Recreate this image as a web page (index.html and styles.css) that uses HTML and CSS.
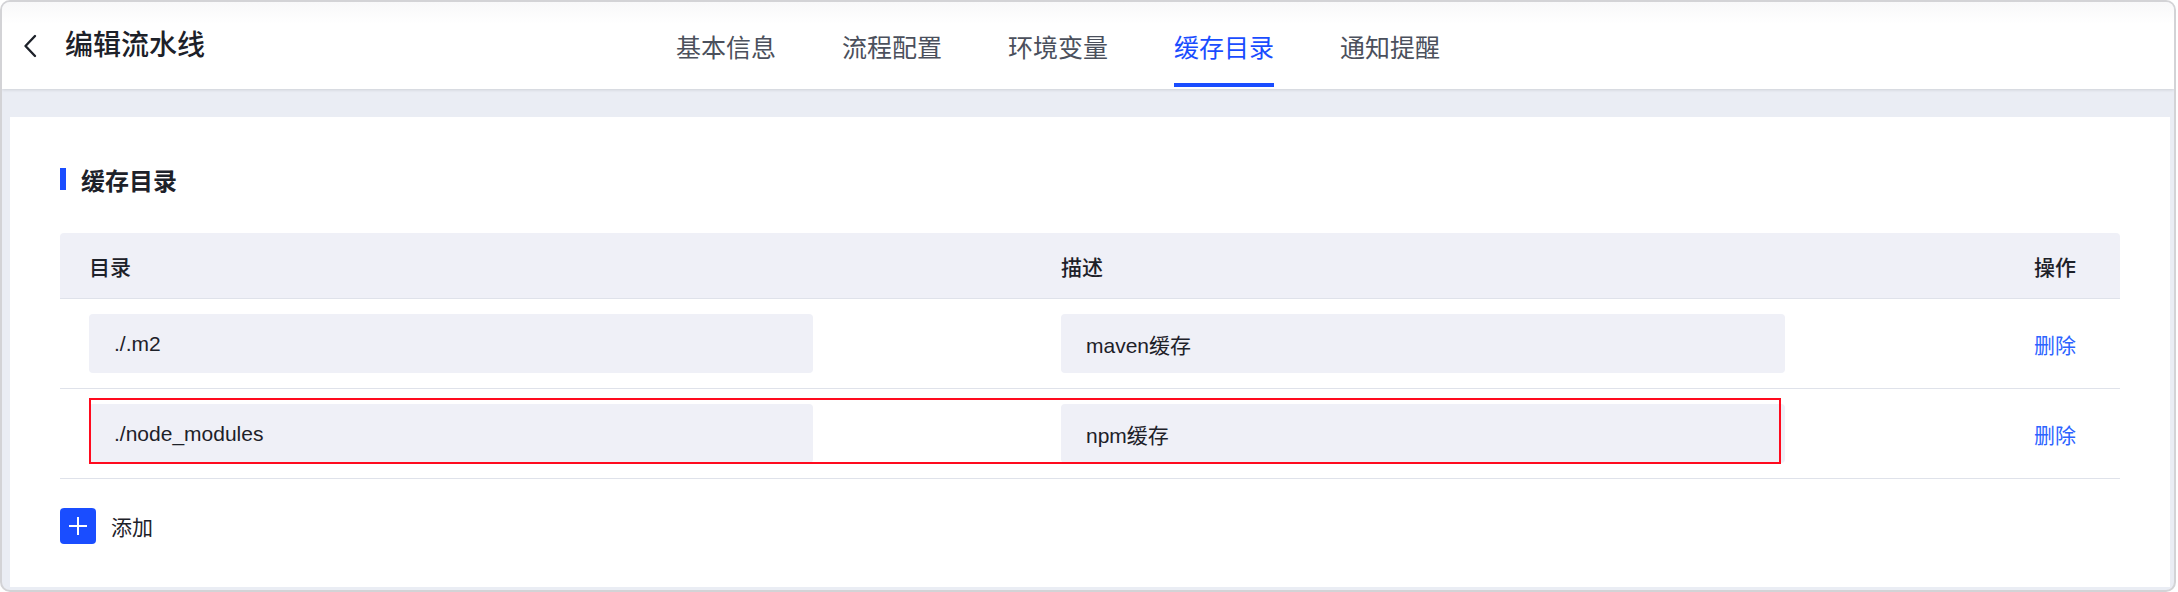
FILE: index.html
```
<!DOCTYPE html>
<html lang="zh-CN">

<head>
    <meta charset="UTF-8">
    <meta name="viewport" content="width=device-width, initial-scale=1.0">
    <title>编辑流水线</title>
    <link rel="stylesheet" href="styles.css">
</head>

<body>
    <div class="window">
        <header class="topbar">
            <a class="back">
                <svg width="14" height="24" viewBox="0 0 14 24">
                    <path d="M12 2 L2.5 12 L12 22" fill="none" stroke="#1d2129" stroke-width="2.4" stroke-linecap="round" stroke-linejoin="round" />
                </svg>
            </a>
            <h1 class="page-title">编辑流水线</h1>
            <nav class="tabs">
                <span class="tab">基本信息</span>
                <span class="tab">流程配置</span>
                <span class="tab">环境变量</span>
                <span class="tab active">缓存目录</span>
                <span class="tab">通知提醒</span>
            </nav>
        </header>

        <main class="content">
            <section class="card">
                <h2 class="card-title">缓存目录</h2>

                <div class="cache-table">
                    <div class="thead">
                        <div class="cell">目录</div>
                        <div class="cell">描述</div>
                        <div class="cell op">操作</div>
                    </div>
                    <div class="trow">
                        <div class="cell"><div class="field">./.m2</div></div>
                        <div class="cell"><div class="field">maven缓存</div></div>
                        <div class="cell op"><a class="link">删除</a></div>
                    </div>
                    <div class="trow marked">
                        <div class="cell"><div class="field">./node_modules</div></div>
                        <div class="cell"><div class="field">npm缓存</div></div>
                        <div class="cell op"><a class="link">删除</a></div>
                        <span class="highlight"></span>
                    </div>
                </div>

                <div class="add-row">
                    <span class="add-btn">
                        <svg width="18" height="18" viewBox="0 0 18 18">
                            <path d="M9 0 V18 M0 9 H18" stroke="#fff" stroke-width="2" />
                        </svg>
                    </span>
                    <span>添加</span>
                </div>
            </section>
        </main>
    </div>
</body>

</html>
```

FILE: styles.css
```
body {
    margin: 0;
    padding: 0;
    background-color: #fff;
    font-family: "Liberation Sans", "Noto Sans CJK SC", sans-serif;
    color: #1d2129;
}

.window {
    width: 2176px;
    height: 592px;
    box-sizing: border-box;
    border: 2px solid #d3d3d6;
    border-radius: 10px;
    overflow: hidden;
    display: flex;
    flex-direction: column;
    background-color: #eaedf4;
}

/* top bar */
.topbar {
    height: 87px;
    flex-shrink: 0;
    display: flex;
    align-items: center;
    padding-left: 21px;
    background: linear-gradient(#f8f8f9, #fff 22px);
    box-shadow: 0 1px 3px rgba(0, 0, 0, 0.12);
    position: relative;
    z-index: 1;
}

.back {
    display: flex;
    width: 14px;
    height: 24px;
    cursor: pointer;
}

.page-title {
    margin: 0 0 0 28px;
    font-size: 28px;
    font-weight: 500;
    line-height: 1;
    color: #1d2129;
}

.tabs {
    display: flex;
    align-self: stretch;
    gap: 66px;
    margin-left: 471px;
}

.tab {
    display: flex;
    align-items: center;
    padding-top: 6px;
    margin-bottom: 2px;
    border-bottom: 4px solid transparent;
    font-size: 25px;
    color: #4b505c;
    cursor: pointer;
}

.tab.active {
    color: #1a4dff;
    border-bottom-color: #1a4dff;
}

/* content */
.content {
    flex: 1;
    display: flex;
    padding: 28px 4px 3px 8px;
}

.card {
    flex: 1;
    background-color: #fff;
    padding: 50px 50px 0;
}

.card-title {
    margin: 0;
    height: 24px;
    display: flex;
    align-items: center;
    font-size: 24px;
    font-weight: 600;
    color: #1d2129;
}

.card-title::before {
    content: "";
    width: 6px;
    height: 22px;
    margin-right: 15px;
    background-color: #1a4dff;
}

.cache-table {
    margin-top: 42px;
    font-size: 21px;
}

.thead,
.trow {
    display: grid;
    grid-template-columns: 972px 972px 1fr;
    align-items: center;
    border-bottom: 1px solid #dfe2ea;
}

.thead {
    height: 65px;
    background-color: #eff0f7;
    border-radius: 4px 4px 0 0;
    font-weight: 500;
}

.trow {
    padding: 15px 0;
    position: relative;
}

.cell {
    padding-left: 29px;
}

.cell.op {
    padding-left: 0;
    padding-right: 44px;
    text-align: right;
}

.field {
    width: 724px;
    height: 59px;
    box-sizing: border-box;
    padding-left: 25px;
    display: flex;
    align-items: center;
    background-color: #eff0f7;
    border-radius: 4px;
    color: #1d2129;
}

.link {
    color: #2c63ff;
    cursor: pointer;
}

.highlight {
    position: absolute;
    top: 9px;
    left: 29px;
    width: 1692px;
    height: 66px;
    box-sizing: border-box;
    border: 2px solid #ff0a1e;
    pointer-events: none;
}

.add-row {
    margin-top: 29px;
    display: flex;
    align-items: center;
    gap: 15px;
    font-size: 21px;
    color: #1d2129;
}

.add-btn {
    width: 36px;
    height: 36px;
    display: flex;
    align-items: center;
    justify-content: center;
    background-color: #1a4dff;
    border-radius: 4px;
    cursor: pointer;
}
```
